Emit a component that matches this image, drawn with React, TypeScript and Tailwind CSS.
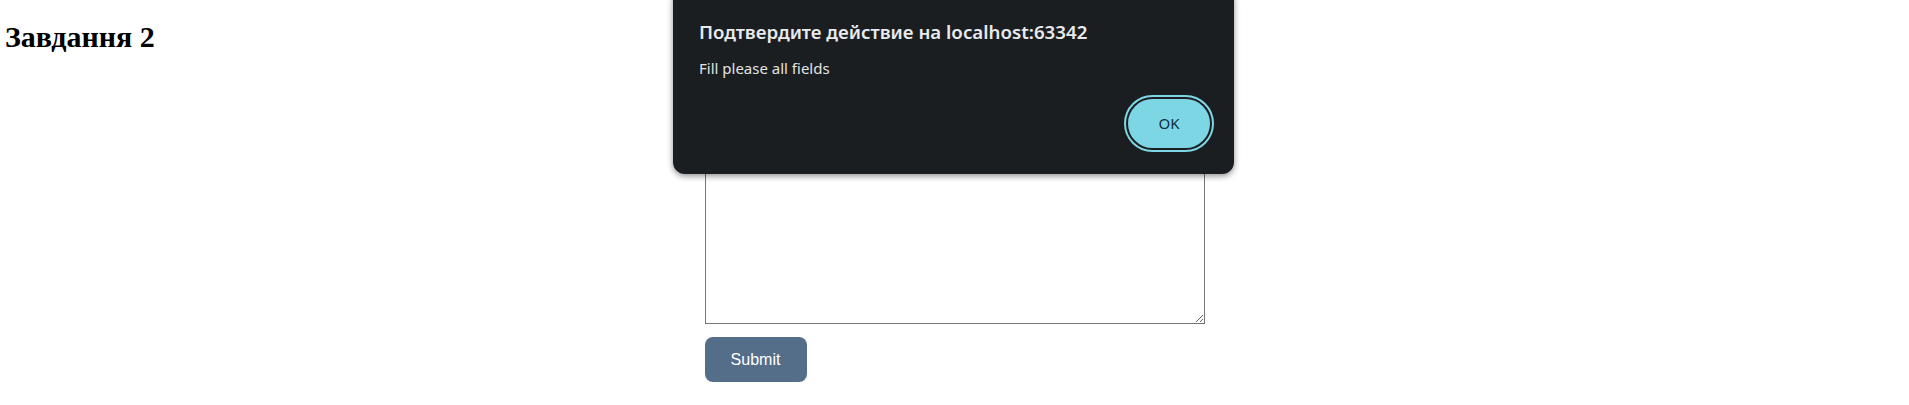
export default function App() {
  return (
    <div className="relative min-h-[405px] w-full bg-white">
      <h2 className="pl-[5px] pt-[20px] text-[30px] font-bold leading-[34px] text-black [font-family:'Liberation_Serif',serif]">
        Завдання 2
      </h2>

      <form className="mx-auto mt-[110px] flex w-[500px] flex-col gap-[13px]">
        <textarea className="h-[160px] w-[500px] resize border border-[#767676] bg-white" />
        <button
          type="button"
          className="h-[45px] w-[102px] rounded-[8px] bg-[#546e8a] text-[16px] text-white [font-family:'Liberation_Sans',Arial,sans-serif]"
        >
          Submit
        </button>
      </form>

      {/* alert dialog */}
      <div className="absolute left-[673px] top-[-12px] w-[561px] rounded-[12px] bg-[#1b1e21] pb-[22px] pl-[26px] pr-[20px] pt-[32px] shadow-[0_2px_6px_rgba(0,0,0,0.45)] [font-family:'Noto_Sans','Open_Sans',sans-serif]">
        <div className="text-[18.7px] font-semibold leading-[24px] text-[#e8eaed]">
          Подтвердите действие на localhost:63342
        </div>
        <div className="mt-[14px] text-[15px] leading-[20px] text-[#e3e3e3]">
          Fill please all fields
        </div>
        <div className="mt-[17px] flex justify-end">
          <div className="rounded-full border-[2px] border-[#7dd6e3] bg-[#1b1e21] p-[2px]">
            <button
              type="button"
              className="h-[49px] w-[82px] rounded-full bg-[#7dd6e3] text-[15px] text-[#10303e]"
            >
              OK
            </button>
          </div>
        </div>
      </div>
    </div>
  );
}
